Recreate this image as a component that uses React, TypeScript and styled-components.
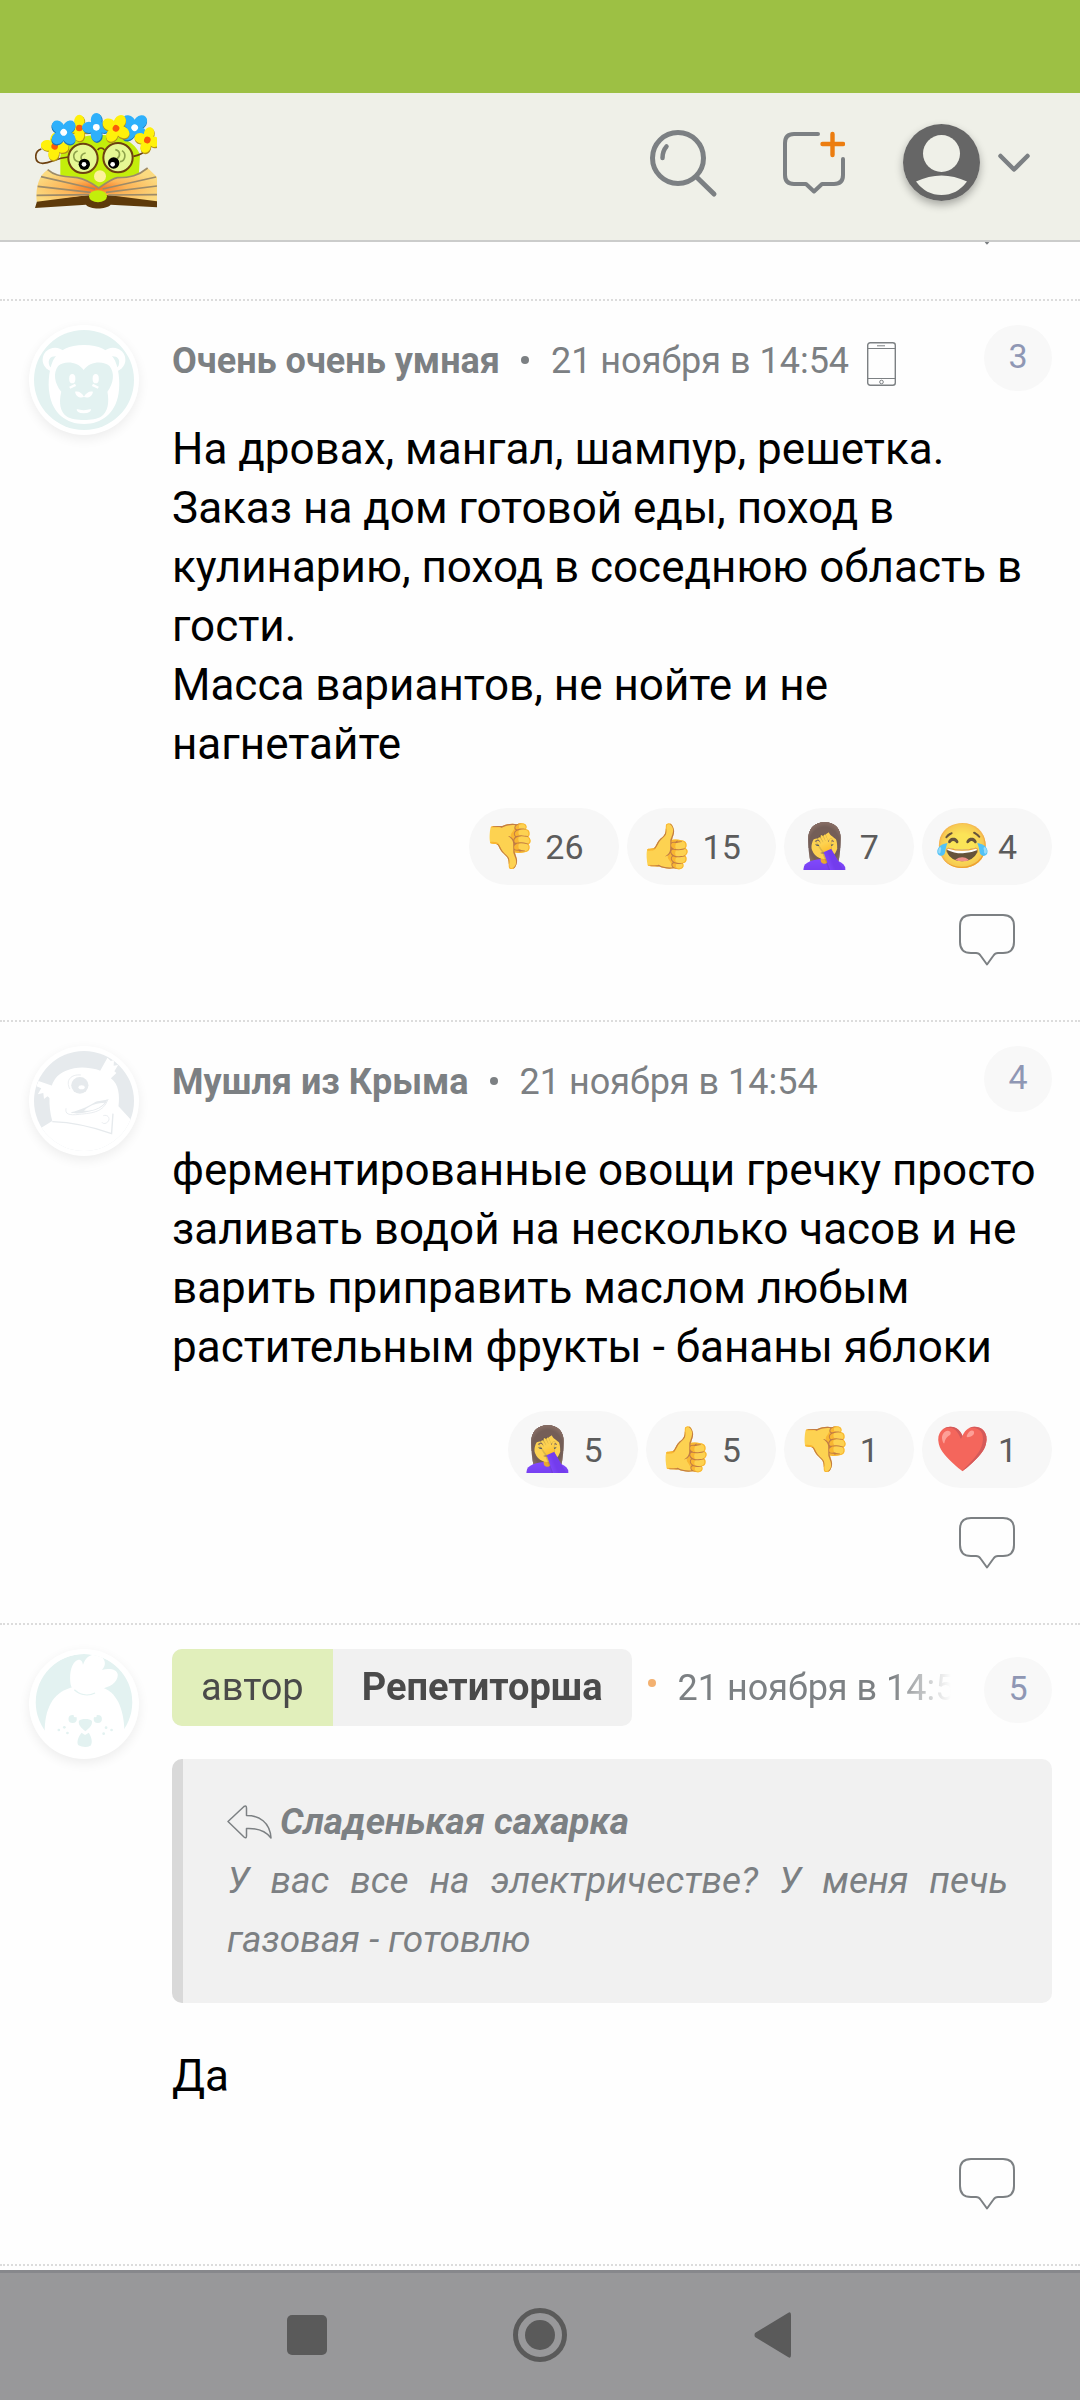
import React from 'react';
import styled, { createGlobalStyle } from 'styled-components';

const GlobalStyle = createGlobalStyle`
  * { box-sizing: border-box; }
  body { margin: 0; background: #fefefe; font-family: Roboto, "Noto Sans", sans-serif; }
  button { font: inherit; color: inherit; background: none; border: 0; padding: 0; margin: 0; cursor: pointer; }
  a { color: inherit; text-decoration: none; }
  p, blockquote { margin: 0; }
  svg { display: block; }
`;

const Screen = styled.div`
  display: flex;
  flex-direction: column;
  height: 100vh;
`;

const StatusBar = styled.div`
  flex: 0 0 93px;
  background: #9dc044;
`;

const TopBar = styled.header`
  flex: 0 0 149px;
  display: flex;
  justify-content: space-between;
  align-items: flex-start;
  padding: 20px 50px 0 35px;
  background: #eff0e8;
  border-bottom: 2px solid #cbcccb;
`;

const Tools = styled.nav`
  display: flex;
  align-items: center;
  height: 99px;
`;

const ToolButton = styled.button<{ $gap: number }>`
  margin-left: ${(p) => p.$gap}px;
`;

const ProfileButton = styled(ToolButton)`
  display: flex;
  align-items: center;
  gap: 18px;
`;

const ProfilePicture = styled.span`
  border-radius: 50%;
  box-shadow: 0 4px 8px rgba(0, 0, 0, 0.3);
`;

const Feed = styled.main`
  flex: 1;
  min-height: 0;
  overflow: hidden;
`;

const PreviousTail = styled.div`
  display: flex;
  flex-direction: column;
  align-items: flex-end;
  justify-content: flex-end;
  height: 57px;
  padding: 0 28px 54px;
`;

const Comment = styled.article`
  display: grid;
  grid-template-columns: 110px minmax(0, 1fr);
  column-gap: 33px;
  align-items: start;
  padding: 24px 28px 54px 29px;
  border-top: 2px dotted #dcdcdc;
`;

const Avatar = styled.a`
  display: block;
  width: 110px;
  height: 110px;
  padding: 5px;
  border-radius: 50%;
  background: #fff;
  box-shadow: 0 4px 12px rgba(0, 0, 0, 0.07);
  svg { border-radius: 50%; }
`;

const Content = styled.div`
  display: flex;
  flex-direction: column;
`;

const CommentHeader = styled.div`
  display: flex;
  justify-content: space-between;
  align-items: flex-start;
`;

const Meta = styled.div<{ $faded?: boolean }>`
  position: relative;
  flex: 1;
  min-width: 0;
  display: flex;
  align-items: center;
  min-height: 72px;
  margin-right: 33px;
  overflow: hidden;
  white-space: nowrap;
  font-size: 36px;
  line-height: 42px;
  color: #7c8083;
  ${(p) => p.$faded && '-webkit-mask-image: linear-gradient(90deg, #000 calc(100% - 60px), transparent); mask-image: linear-gradient(90deg, #000 calc(100% - 60px), transparent);'}
`;

const Author = styled.a`
  font-weight: 700;
`;

const Dot = styled.span<{ $accent?: boolean }>`
  flex: none;
  width: 8px;
  height: 8px;
  margin: ${(p) => (p.$accent ? '0 22px 10px 16px' : '0 22px 3px 21px')};
  border-radius: 50%;
  background: ${(p) => (p.$accent ? '#f3b171' : '#7c8083')};
`;

const PhoneMark = styled.span`
  margin: 6px 0 0 18px;
`;

const AuthorTag = styled.a`
  flex: none;
  display: flex;
  height: 77px;
  border-radius: 10px;
  overflow: hidden;
  background: #f1f1f1;
  color: #4a4a4a;
  font-size: 38px;
  line-height: 76px;
`;

const TagLabel = styled.span`
  padding: 0 29px;
  background: #e1efbb;
`;

const TagName = styled.strong`
  padding: 0 29px;
  font-weight: 700;
`;

const CommentNumber = styled.a<{ $low?: boolean }>`
  flex: none;
  width: 68px;
  height: 66px;
  margin-top: ${(p) => (p.$low ? 8 : 0)}px;
  border-radius: 34px;
  background: #f8f8f8;
  color: #8f97b4;
  font-size: 34px;
  line-height: 62px;
  text-align: center;
`;

const Body = styled.p<{ $gap?: number }>`
  margin-top: ${(p) => p.$gap ?? 23}px;
  font-size: 44px;
  line-height: 59px;
  color: #000;
`;

const Quote = styled.blockquote`
  margin-top: 33px;
  padding: 33px 44px 34px 44px;
  border-left: 11px solid #d9d9d9;
  border-radius: 10px;
  background: #f1f1f1;
  color: #7c8083;
  font-size: 37px;
  line-height: 59px;
  font-style: italic;
  text-align: justify;
`;

const QuoteAuthor = styled.a`
  display: flex;
  align-items: center;
  gap: 8px;
  font-weight: 700;
`;

const Reactions = styled.div`
  display: flex;
  justify-content: flex-end;
  gap: 8px;
  margin-top: 34px;
`;

const Reaction = styled.button`
  display: flex;
  align-items: center;
  gap: 9px;
  height: 77px;
  padding: 0 35px 0 14px;
  border-radius: 39px;
  background: #f7f7f7;
  color: #5c5c5c;
  font-size: 34px;
`;

const Emoji = styled.span`
  display: flex;
  justify-content: center;
  width: 53px;
  font-family: "Noto Color Emoji", sans-serif;
  font-size: 44px;
  line-height: 77px;
  opacity: 0.8;
`;

const ReplyButton = styled.button<{ $gap: number }>`
  align-self: flex-end;
  margin: ${(p) => p.$gap}px 37px 0 0;
`;

const SystemBar = styled.nav`
  flex: 0 0 130px;
  display: flex;
  justify-content: center;
  align-items: center;
  padding-bottom: 3px;
  border-top: 3px solid #87888c;
  background: #98989a;
`;

const SystemButton = styled.button`
  flex: 0 1 233px;
  display: flex;
  justify-content: center;
`;

const LogoArt = () => {
  const flower = (x: number, y: number, s: number, fill: string, edge: string, core: string, rot: number) => (
    <g transform={`translate(${x} ${y}) rotate(${rot})`}>
      <g fill={edge} transform="translate(2 3)">
        {[0, 90, 180, 270].map((a) => (
          <ellipse key={a} cx={0} cy={-s * 0.62} rx={s * 0.46} ry={s * 0.56} transform={`rotate(${a})`} />
        ))}
      </g>
      <g fill={fill}>
        {[0, 90, 180, 270].map((a) => (
          <ellipse key={a} cx={0} cy={-s * 0.6} rx={s * 0.45} ry={s * 0.56} transform={`rotate(${a})`} />
        ))}
      </g>
      <circle r={10} fill={core} />
    </g>
  );
  return (
    <svg width="122" height="96" viewBox="105 100 366 288" aria-hidden="true">
      <defs>
        <radialGradient id="page" cx="0.5" cy="0.6" r="0.55">
          <stop offset="0" stopColor="#f9701c" />
          <stop offset="0.45" stopColor="#fcb457" />
          <stop offset="1" stopColor="#fbda80" />
        </radialGradient>
      </defs>
      <path d="M181 290 V230 C185 190 240 165 300 166 C360 166 405 185 420 225 L416 292 L300 330 Z" fill="#c3ee0b" />
      <path d="M105 385 L112 362 L268 346 H330 L471 360 V383 L332 375 C318 390 270 390 258 375 Z" fill="#5e3a0a" />
      <path d="M110 366 C106 320 118 285 143 270 C160 285 175 290 232 294 C255 298 275 310 296 325 C315 312 335 298 352 294 C390 294 415 288 443 265 L471 292 V365 L330 347 H262 Z" fill="url(#page)" />
      <path d="M143 270 C160 285 175 290 232 294 C255 298 275 310 296 325 C315 312 335 298 352 294 C390 294 415 288 443 265 M123 291 L285 328 M113 320 L272 338 M110 347 L268 345 M468 292 L308 328 M471 319 L318 338 M471 345 L325 346" fill="none" stroke="#9d8b69" strokeWidth="5" />
      <ellipse cx="294" cy="350" rx="27" ry="18" fill="#c3ee0b" />
      <circle cx="300" cy="290" r="18" fill="#fdf29a" />
      <path d="M124 208 C102 215 100 250 128 251 C155 250 165 235 205 232 M400 230 C420 226 430 220 438 212 M293 211 C298 203 308 203 313 211" fill="none" stroke="#6d4110" strokeWidth="5" />
      <circle cx="249" cy="236" r="44" fill="#e6f894" stroke="#6d4110" strokeWidth="6" />
      <circle cx="354" cy="234" r="44" fill="#e6f894" stroke="#6d4110" strokeWidth="6" />
      <path d="M233 214 C215 220 218 246 240 247 M257 220 C243 222 240 235 246 242 M346 210 C362 214 362 230 350 238 M366 213 C380 222 376 244 360 246" fill="none" stroke="#8fa34c" strokeWidth="5" />
      <circle cx="253" cy="254" r="17" fill="#000" />
      <circle cx="252" cy="254" r="7" fill="#fff" />
      <circle cx="341" cy="250" r="17" fill="#000" />
      <circle cx="338" cy="254" r="7" fill="#fff" />
      {flower(164, 200, 36, '#fff10a', '#b5941a', '#fa5a0a', 8)}
      {flower(238, 145, 34, '#fff10a', '#b5941a', '#fa5a0a', 0)}
      {flower(191, 158, 38, '#2eb0fb', '#1b74b4', '#fff', 45)}
      {flower(404, 144, 40, '#2eb0fb', '#1b74b4', '#fff', 45)}
      {flower(289, 143, 37, '#2eb0fb', '#1b74b4', '#fff', 0)}
      {flower(348, 146, 38, '#fff10a', '#b5941a', '#fa5a0a', 30)}
      {flower(442, 181, 34, '#fff10a', '#b5941a', '#fa5a0a', 15)}
    </svg>
  );
};

const SearchIcon = () => (
  <svg width="70" height="70" viewBox="0 0 70 70" fill="none" stroke="#7c8083" strokeLinecap="round" aria-hidden="true">
    <circle cx="30" cy="30" r="25.500" strokeWidth="5" />
    <path d="M48.500 49 L66 66" strokeWidth="5" />
    <path d="M14.500 30 Q14.500 23 18.500 18.500" strokeWidth="4.500" />
  </svg>
);

const NewPostIcon = () => (
  <svg width="62" height="63" viewBox="0 0 62 63" fill="none" strokeLinecap="round" aria-hidden="true">
    <path d="M35 3 H11 Q2 3 2 12 V44 Q2 53 11 53 H23 L31 60.500 L39 53 H51 Q60 53 60 44 V28" stroke="#7c8083" strokeWidth="4" strokeLinejoin="round" />
    <path d="M39.500 13 H60 M49.500 3 V24" stroke="#ec7d10" strokeWidth="4.400" />
  </svg>
);

const UserIcon = () => (
  <svg width="77" height="77" viewBox="0 0 77 77" aria-hidden="true">
    <circle cx="38.500" cy="38.500" r="38.500" fill="#666" />
    <circle cx="38.500" cy="29.500" r="18.500" fill="#eff0e8" />
    <path d="M13 57.500 Q38.500 45.500 64 57.500 Q54 71 38.500 71 Q23 71 13 57.500 Z" fill="#eff0e8" />
  </svg>
);

const ChevronIcon = () => (
  <svg width="32" height="20" viewBox="0 0 32 20" aria-hidden="true">
    <path d="M2.500 3 L16 16.500 L29.500 3" fill="none" stroke="#7c8083" strokeWidth="4.500" strokeLinecap="round" strokeLinejoin="round" />
  </svg>
);

const BubbleIcon = () => (
  <svg width="56" height="52" viewBox="0 0 56 52" aria-hidden="true">
    <path d="M12 1 H44 Q55 1 55 12 V28 Q55 39 44 39 H39 Q36 39 34.500 41.500 L28 50.500 L21.500 41.500 Q20 39 17 39 H12 Q1 39 1 28 V12 Q1 1 12 1 Z" fill="none" stroke="#7c8083" strokeWidth="2" strokeLinejoin="round" />
  </svg>
);

const PhoneIcon = () => (
  <svg width="29" height="44" viewBox="0 0 29 44" fill="none" stroke="#7c8083" aria-hidden="true">
    <rect x="0.700" y="0.700" width="27.600" height="42.600" rx="2.500" strokeWidth="1.400" />
    <path d="M1 6.500 H28 M1 36.500 H28" strokeWidth="1.200" />
    <path d="M10 3.800 H18" strokeWidth="1" />
    <circle cx="14.500" cy="40" r="1.800" strokeWidth="1" />
  </svg>
);

const ReplyArrow = () => (
  <svg width="45" height="34" viewBox="0 0 45 34" aria-hidden="true">
    <path d="M1 16.500 L17 1.500 Q19.500 0 19.500 3 V10.500 C32 10.500 43 17 44 33 C38 25 30 23 19.500 23.500 V31 Q19.500 34 17 32 Z" fill="none" stroke="#7c8083" strokeWidth="1.500" strokeLinejoin="round" />
  </svg>
);

const MonkeyArt = () => {
  const half = (
    <>
      <circle cx="160" cy="209" r="36" fill="#fff" />
      <path d="M144 228 C136 205 150 196 168 199 C160 208 154 220 150 234 Z" fill="#e3f2f1" />
    </>
  );
  return (
    <svg width="100" height="100" viewBox="99 120 290 300" preserveAspectRatio="none" aria-hidden="true">
      <rect x="99" y="120" width="290" height="300" fill="#e3f2f1" />
      {half}
      <g transform="matrix(-1 0 0 1 488 0)">{half}</g>
      <path d="M244 165 C290 165 312 180 328 202 C345 225 350 280 344 312 C335 370 295 402 244 402 C193 402 153 370 144 312 C138 280 143 225 160 202 C176 180 198 165 244 165 Z" fill="#fff" />
      <path d="M243 240 C225 212 184 212 169 228 C154 248 158 280 178 305 C170 340 176 365 192 378 C206 388 225 390 244 390 C263 390 282 388 296 378 C312 365 318 340 312 305 C330 280 334 248 318 228 C302 212 261 212 243 240 Z" fill="#e3f2f1" />
      <g fill="#fff">
        <ellipse cx="210" cy="266" rx="9" ry="14" />
        <ellipse cx="278" cy="266" rx="9" ry="14" />
        <path d="M201 290 L218 281 L221 288 L204 296 Z M287 290 L270 281 L267 288 L284 296 Z" />
        <path d="M218 305 C228 302 238 308 244 320 C250 308 260 302 270 305 C268 320 256 325 244 321 C232 325 220 320 218 305 Z" />
        <path d="M223 357 Q243 364 264 357 Q266 369 243 370 Q221 369 223 357 Z" />
      </g>
    </svg>
  );
};

const FishArt = () => (
  <svg width="100" height="100" viewBox="99 156 290 300" preserveAspectRatio="none" aria-hidden="true">
    <rect x="99" y="156" width="290" height="300" fill="#e6eaed" />
    <path d="M99 456 V400 L152 366 C140 320 140 270 160 240 C180 212 225 200 262 208 C275 209 285 213 291 215 L312 176 L322 186 L331 183 L330 200 L343 198 L332 217 L338 222 L322 238 C345 255 348 290 344 322 L378 360 L389 400 V456 Z" fill="#fff" />
    <path d="M112 246 L152 260 L148 300 L138 292 L128 300 L126 282 L110 286 L120 268 L106 262 Z" fill="#fff" />
    <circle cx="232" cy="259" r="25" fill="#e6eaed" />
    <ellipse cx="237" cy="265" rx="9" ry="6" fill="#fff" />
    <g fill="none" stroke="#e6eaed" strokeWidth="2.500">
      <path d="M203 270 C190 245 205 225 235 228" />
      <path d="M192 328 C188 345 200 350 230 346 C270 342 300 340 314 300" />
      <path d="M300 350 C312 346 320 356 315 366 C310 374 300 376 296 370" />
      <path d="M152 368 C210 370 270 384 324 404 L328 344" strokeWidth="4" />
    </g>
    <path d="M205 340 C235 333 260 320 278 308 C292 304 304 306 312 300 C308 318 290 330 266 336 C240 344 215 346 205 340 Z" fill="#e6eaed" />
    <path d="M244 335 C262 316 285 312 304 311 C290 328 268 336 244 335 Z" fill="#fff" />
  </svg>
);

const PuppyArt = () => (
  <svg width="100" height="100" viewBox="99 105 290 300" preserveAspectRatio="none" aria-hidden="true">
    <rect x="99" y="105" width="290" height="300" fill="#fff" />
    <ellipse cx="244" cy="250" rx="140" ry="145" fill="#e3f2f1" />
    <path d="M130 405 V330 C132 260 160 215 215 204 H290 C340 215 358 270 361 330 V405 Z" fill="#fff" />
    <path d="M205 195 C200 160 210 125 228 122 C238 122 240 130 241 138 C250 108 275 100 292 112 C308 122 308 140 296 153 C315 146 342 150 342 168 C342 192 315 206 296 208 C285 222 262 226 244 226 C220 224 208 212 205 195 Z" fill="#fff" />
    <path d="M216 212 C235 230 258 231 276 222" fill="none" stroke="#e3f2f1" strokeWidth="4" />
    <g fill="#e3f2f1">
      <circle cx="211" cy="300" r="12" />
      <circle cx="284" cy="300" r="12" />
      <path d="M229 306 C236 298 260 298 267 306 C269 320 258 328 248 337 C238 328 227 320 229 306 Z" />
      <path d="M237 341 L247 348 L258 341 C266 355 270 370 263 380 C252 386 240 385 228 379 C221 370 228 352 237 341 Z" />
      <circle cx="187" cy="325" r="4" /><circle cx="171" cy="333" r="4" /><circle cx="196" cy="342" r="4" />
      <circle cx="308" cy="326" r="4" /><circle cx="324" cy="333" r="4" /><circle cx="301" cy="344" r="4" />
    </g>
    <circle cx="219" cy="290" r="5" fill="#fff" />
    <circle cx="276" cy="290" r="5" fill="#fff" />
  </svg>
);

type ReactionData = [emoji: string, name: string, count: number];

const ReactionList = ({ items }: { items: ReactionData[] }) => (
  <Reactions>
    {items.map(([emoji, name, count]) => (
      <Reaction key={name} type="button">
        <Emoji>{emoji}</Emoji>
        {count}
      </Reaction>
    ))}
  </Reactions>
);

const Reply = ({ gap }: { gap: number }) => (
  <ReplyButton type="button" aria-label="Ответить" $gap={gap}>
    <BubbleIcon />
  </ReplyButton>
);

export default function App() {
  return (
    <Screen>
      <GlobalStyle />
      <StatusBar />
      <TopBar>
        <a href="#home" aria-label="Главная"><LogoArt /></a>
        <Tools>
          <ToolButton type="button" aria-label="Поиск" $gap={0}><SearchIcon /></ToolButton>
          <ToolButton type="button" aria-label="Новая тема" $gap={65}><NewPostIcon /></ToolButton>
          <ProfileButton type="button" aria-label="Профиль" $gap={58}>
            <ProfilePicture><UserIcon /></ProfilePicture>
            <ChevronIcon />
          </ProfileButton>
        </Tools>
      </TopBar>

      <Feed>
        <PreviousTail><Reply gap={0} /></PreviousTail>

        <Comment>
          <Avatar href="#user-1" aria-label="Очень очень умная"><MonkeyArt /></Avatar>
          <Content>
            <CommentHeader>
              <Meta>
                <Author href="#user-1">Очень очень умная</Author>
                <Dot />
                <time>21 ноября в 14:54</time>
                <PhoneMark><PhoneIcon /></PhoneMark>
              </Meta>
              <CommentNumber href="#comment-3">3</CommentNumber>
            </CommentHeader>
            <Body>
              На дровах, мангал, шампур, решетка. Заказ на дом готовой еды, поход в кулинарию, поход в соседнюю область в гости.
              <br />
              Масса вариантов, не нойте и не нагнетайте
            </Body>
            <ReactionList items={[['👎', 'down', 26], ['👍', 'up', 15], ['🤦‍♀️', 'facepalm', 7], ['😂', 'joy', 4]]} />
            <Reply gap={29} />
          </Content>
        </Comment>

        <Comment>
          <Avatar href="#user-2" aria-label="Мушля из Крыма"><FishArt /></Avatar>
          <Content>
            <CommentHeader>
              <Meta>
                <Author href="#user-2">Мушля из Крыма</Author>
                <Dot />
                <time>21 ноября в 14:54</time>
              </Meta>
              <CommentNumber href="#comment-4">4</CommentNumber>
            </CommentHeader>
            <Body>
              ферментированные овощи гречку просто заливать водой на несколько часов и не варить приправить маслом любым растительным фрукты - бананы яблоки
            </Body>
            <ReactionList items={[['🤦‍♀️', 'facepalm', 5], ['👍', 'up', 5], ['👎', 'down', 1], ['❤️', 'heart', 1]]} />
            <Reply gap={29} />
          </Content>
        </Comment>

        <Comment>
          <Avatar href="#user-3" aria-label="Репетиторша"><PuppyArt /></Avatar>
          <Content>
            <CommentHeader>
              <Meta $faded>
                <AuthorTag href="#user-3">
                  <TagLabel>автор</TagLabel>
                  <TagName>Репетиторша</TagName>
                </AuthorTag>
                <Dot $accent />
                <time>21 ноября в 14:54</time>
              </Meta>
              <CommentNumber href="#comment-5" $low>5</CommentNumber>
            </CommentHeader>
            <Quote>
              <QuoteAuthor href="#comment-2"><ReplyArrow />Сладенькая сахарка</QuoteAuthor>
              <p>У вас все на электричестве? У меня печь газовая - готовлю</p>
            </Quote>
            <Body $gap={44}>Да</Body>
            <Reply gap={52} />
          </Content>
        </Comment>

        <Comment />
      </Feed>

      <SystemBar>
        <SystemButton type="button" aria-label="Недавние">
          <svg width="40" height="40" viewBox="0 0 40 40"><rect width="40" height="40" rx="5" fill="#5a5a5a" /></svg>
        </SystemButton>
        <SystemButton type="button" aria-label="Домой">
          <svg width="54" height="54" viewBox="0 0 54 54">
            <circle cx="27" cy="27" r="24.500" fill="none" stroke="#5a5a5a" strokeWidth="5" />
            <circle cx="27" cy="27" r="15" fill="#5a5a5a" />
          </svg>
        </SystemButton>
        <SystemButton type="button" aria-label="Назад">
          <svg width="38" height="46" viewBox="0 0 38 46"><path d="M1 21 Q0 23 1 25 L34 45 Q37 47 37 43 V3 Q37 -1 34 1 Z" fill="#5a5a5a" /></svg>
        </SystemButton>
      </SystemBar>
    </Screen>
  );
}
